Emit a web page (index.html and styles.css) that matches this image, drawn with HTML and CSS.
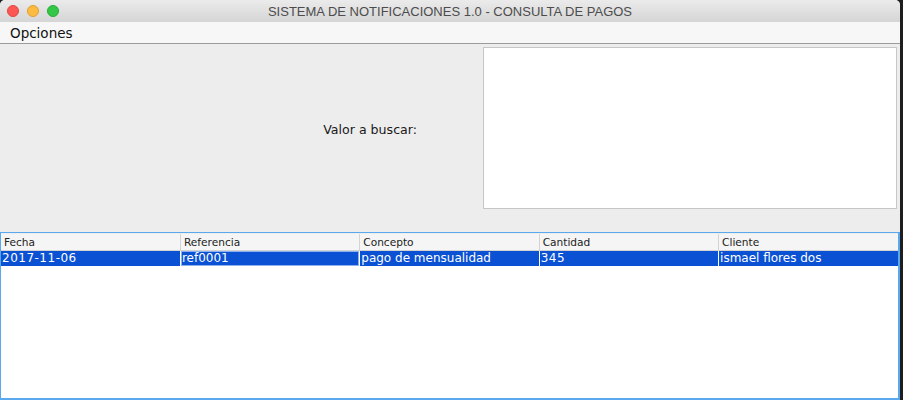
FILE: index.html
```html
<!DOCTYPE html>
<html>
<head>
<meta charset="utf-8">
<link rel="stylesheet" href="styles.css">
</head>
<body>
<div class="window">
  <div class="titlebar">
    <div class="lights">
      <span class="light red"></span>
      <span class="light yellow"></span>
      <span class="light green"></span>
    </div>
    <div class="title">SISTEMA DE NOTIFICACIONES 1.0 - CONSULTA DE PAGOS</div>
  </div>
  <div class="menubar"><span class="menu">Opciones</span></div>
  <div class="panel">
    <div class="label">Valor a buscar:</div>
    <div class="textarea"></div>
  </div>
  <div class="scrollpane">
    <table class="grid">
      <thead>
        <tr><th>Fecha</th><th>Referencia</th><th>Concepto</th><th>Cantidad</th><th>Cliente</th></tr>
      </thead>
      <tbody>
        <tr class="selected"><td class="num">2017-11-06</td><td class="focus">ref0001</td><td>pago de mensualidad</td><td class="num">345</td><td>ismael flores dos</td></tr>
      </tbody>
    </table>
  </div>
</div>
</body>
</html>
```
FILE: styles.css
```css
html, body {
  margin: 0;
  padding: 0;
  background: #1e1e1e;
  width: 903px;
  height: 400px;
  overflow: hidden;
}
.window {
  width: 900px;
  height: 400px;
  background: #ededed;
  border-radius: 5px 5px 0 0;
  overflow: hidden;
  display: flex;
  flex-direction: column;
  font-family: "DejaVu Sans", sans-serif;
}
.titlebar {
  height: 22px;
  flex: none;
  background: linear-gradient(#ebebeb, #d5d5d5);
  position: relative;
  display: flex;
  align-items: center;
  justify-content: center;
}
.lights {
  position: absolute;
  left: 7px;
  top: 5px;
  display: flex;
  gap: 8px;
}
.light {
  width: 12px;
  height: 12px;
  border-radius: 50%;
  box-sizing: border-box;
}
.red { background: #fc5753; border: 1px solid #df4744; }
.yellow { background: #fdbc40; border: 1px solid #de9f34; }
.green { background: #33c748; border: 1px solid #27aa35; }
.title {
  font-family: "Liberation Sans", sans-serif;
  font-size: 13px;
  color: #4c4c4c;
}
.menubar {
  height: 21px;
  flex: none;
  background: #f7f7f7;
  border-bottom: 1px solid #9b9b9b;
  display: flex;
  align-items: center;
  padding-left: 10px;
}
.menu {
  font-size: 13.5px;
  color: #111;
}
.panel {
  flex: none;
  height: 188px;
  box-sizing: border-box;
  padding: 3px 3px 23px 0;
  display: grid;
  grid-template-columns: 1fr 414px;
}
.label {
  align-self: center;
  justify-self: end;
  padding-right: 66px;
  font-size: 12.6px;
  color: #1a1a1a;
  margin-top: 3px;
}
.textarea {
  background: #fff;
  border: 1px solid #c6c6c6;
  box-sizing: border-box;
}
.scrollpane {
  flex: 1;
  background: #fff;
  border: 1px solid #5aa8ee;
  border-bottom-width: 2px;
  border-right-width: 2px;
  box-sizing: border-box;
}
.grid {
  width: 100%;
  table-layout: fixed;
  border-collapse: collapse;
}
.grid th {
  height: 16px;
  padding: 0 0 0 3px;
  text-align: left;
  font-weight: normal;
  font-size: 10.6px;
  color: #222;
  background: #f5f5f5;
  border-left: 1px solid #d4d4d4;
  border-bottom: 1px solid #d2d2d2;
  border-top: 1px solid #ededed;
  white-space: nowrap;
  overflow: hidden;
}
.grid th:first-child {
  border-left: none;
}
.grid td {
  height: 15px;
  padding: 0 0 0 1px;
  font-size: 12px;
  line-height: 15px;
  white-space: nowrap;
  overflow: hidden;
}
.grid td.num {
  letter-spacing: 0.5px;
}
.selected td {
  background: #0a51d4;
  color: #fff;
  border-left: 1px solid #ffffff;
}
.selected td:first-child {
  border-left: none;
}
.selected td.focus {
  box-shadow: inset 0 0 0 1px #8db0f0;
}
```
